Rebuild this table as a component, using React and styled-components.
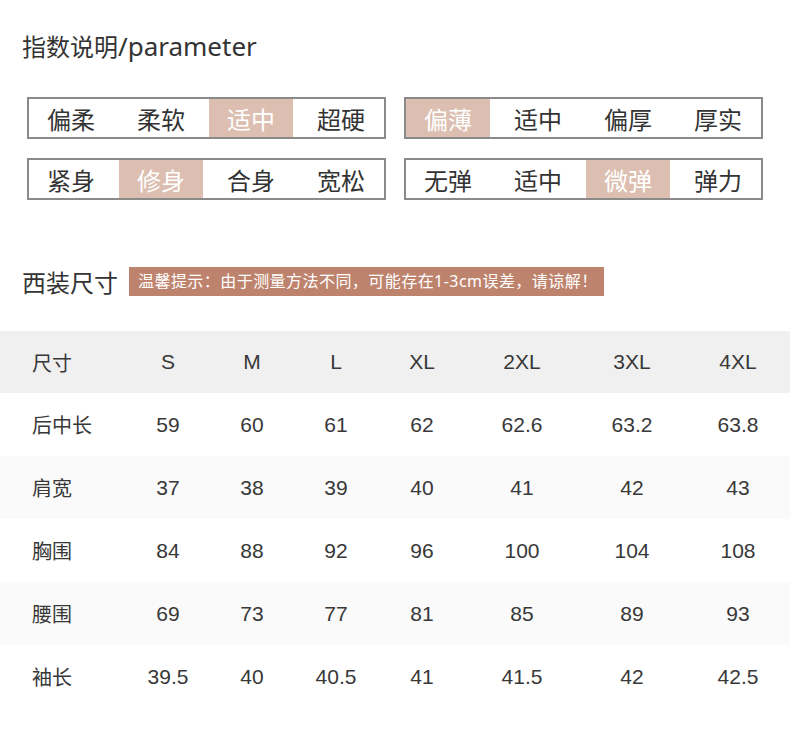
import React from 'react'
import styled, { createGlobalStyle } from 'styled-components'

const GlobalStyle = createGlobalStyle`
  body {
    margin: 0;
    background: #fff;
    font-family: "Noto Sans CJK SC", "Noto Sans", sans-serif;
    color: #333;
  }
`

const Page = styled.div`
  width: 790px;
  padding-top: 33px;
`

const Title = styled.h2`
  margin: 0 0 0 22px;
  height: 26px;
  font-family: "Noto Sans", "Noto Sans CJK SC", sans-serif;
  font-size: 24px;
  font-weight: 400;
  line-height: 26px;
  color: #333;

  span {
    font-size: 26px;
  }
`

const OptionGrid = styled.div`
  display: grid;
  grid-template-columns: 359px 359px;
  column-gap: 18px;
  row-gap: 19px;
  padding-left: 27px;
  margin-top: 38px;
`

const OptionBox = styled.div`
  display: flex;
  gap: 6px;
  height: 42px;
  box-sizing: border-box;
  border: 2px solid #8a8a8a;
`

const Option = styled.div`
  width: 84px;
  display: flex;
  align-items: center;
  justify-content: center;
  font-size: 24px;
  color: ${({ active }) => (active ? '#fff' : '#333')};
  background: ${({ active }) => (active ? '#dcbfb1' : 'transparent')};
`

const SizeHeader = styled.div`
  display: flex;
  align-items: center;
  gap: 11px;
  margin: 67px 0 0 22px;
`

const SizeTitle = styled.h3`
  margin: 0;
  font-size: 24px;
  font-weight: 400;
  line-height: 29px;
  color: #333;
`

const Tip = styled.div`
  background: #be836d;
  color: #fff;
  font-family: "Noto Sans", "Noto Sans CJK SC", sans-serif;
  font-size: 16px;
  letter-spacing: 0.45px;
  height: 29px;
  line-height: 29px;
  padding: 0 6px 0 9px;
`

const Table = styled.div`
  margin-top: 35px;
`

const Row = styled.div`
  display: grid;
  grid-template-columns: 126px 84px 84px 84px 88px 112px 108px 104px;
  align-items: center;
  height: ${({ head }) => (head ? '62px' : '63px')};
  background: ${({ head, shade }) => (head ? '#f0f0f0' : shade ? '#fafafa' : '#fff')};
  font-family: "Liberation Sans", "Noto Sans CJK SC", sans-serif;
  font-size: 21px;
  color: #383838;
`

const Label = styled.div`
  padding-left: 32px;
  font-family: "Noto Sans CJK SC", sans-serif;
  font-size: 20px;
`

const Cell = styled.div`
  text-align: center;
`

const OPTIONS = [
  { items: ['偏柔', '柔软', '适中', '超硬'], active: 2 },
  { items: ['偏薄', '适中', '偏厚', '厚实'], active: 0 },
  { items: ['紧身', '修身', '合身', '宽松'], active: 1 },
  { items: ['无弹', '适中', '微弹', '弹力'], active: 2 },
]

const SIZES = ['S', 'M', 'L', 'XL', '2XL', '3XL', '4XL']

const ROWS = [
  { name: '后中长', values: ['59', '60', '61', '62', '62.6', '63.2', '63.8'] },
  { name: '肩宽', values: ['37', '38', '39', '40', '41', '42', '43'] },
  { name: '胸围', values: ['84', '88', '92', '96', '100', '104', '108'] },
  { name: '腰围', values: ['69', '73', '77', '81', '85', '89', '93'] },
  { name: '袖长', values: ['39.5', '40', '40.5', '41', '41.5', '42', '42.5'] },
]

const App = () => {
  return (
    <Page>
      <GlobalStyle />
      <Title>指数说明<span>/parameter</span></Title>
      <OptionGrid>
        {OPTIONS.map((group, gi) => (
          <OptionBox key={gi}>
            {group.items.map((text, i) => (
              <Option key={i} active={i === group.active}>{text}</Option>
            ))}
          </OptionBox>
        ))}
      </OptionGrid>

      <SizeHeader>
        <SizeTitle>西装尺寸</SizeTitle>
        <Tip>温馨提示：由于测量方法不同，可能存在1-3cm误差，请谅解！</Tip>
      </SizeHeader>

      <Table>
        <Row head>
          <Label>尺寸</Label>
          {SIZES.map(s => <Cell key={s}>{s}</Cell>)}
        </Row>
        {ROWS.map((row, ri) => (
          <Row key={row.name} shade={ri % 2 === 1}>
            <Label>{row.name}</Label>
            {row.values.map((v, i) => <Cell key={i}>{v}</Cell>)}
          </Row>
        ))}
      </Table>
    </Page>
  )
}

export default App
